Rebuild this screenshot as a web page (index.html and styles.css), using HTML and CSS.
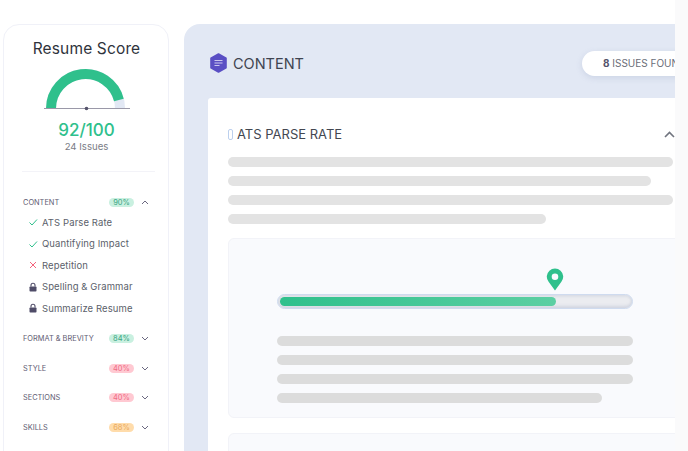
FILE: index.html
```html
<!DOCTYPE html>
<html lang="en">
<head>
    <meta charset="UTF-8">
    <title>Resume Score</title>
    <meta name="viewport" content="width=device-width, initial-scale=1.0">
    <link rel="stylesheet" href="styles.css">
</head>
<body>
<div class="page">
    <aside class="sidebar">
        <h2 class="score-title">Resume Score</h2>
        <svg class="gauge" width="90" height="44" viewBox="0 0 90 44">
            <path d="M8 39.5 A34.5 34.5 0 0 1 77 39.5" fill="none" stroke="#e2e8f4" stroke-width="10"/>
            <path d="M8 39.5 A34.5 34.5 0 0 1 75.9 30.9" fill="none" stroke="#2fc08c" stroke-width="10"/>
            <line x1="1" y1="39.5" x2="87" y2="39.5" stroke="#9a98a8" stroke-width="1"/>
            <circle cx="43.5" cy="39.5" r="1.8" fill="#55536b"/>
        </svg>
        <div class="score-value">92/100</div>
        <div class="score-issues">24 Issues</div>
        <div class="divider"></div>

        <div class="section-row first">
            <span class="section-name">CONTENT</span>
            <span class="badge green">90%</span>
            <svg class="chev" width="8" height="5" viewBox="0 0 8 5"><path d="M1 4 L4 1 L7 4" fill="none" stroke="#6a6880" stroke-width="1"/></svg>
        </div>
        <ul class="items">
            <li><svg class="ico" width="10" height="10" viewBox="0 0 10 10"><path d="M1.5 5.5 L4 8 L9 2.5" fill="none" stroke="#2fc08c" stroke-width="1"/></svg>ATS Parse Rate</li>
            <li><svg class="ico" width="10" height="10" viewBox="0 0 10 10"><path d="M1.5 5.5 L4 8 L9 2.5" fill="none" stroke="#2fc08c" stroke-width="1"/></svg>Quantifying Impact</li>
            <li><svg class="ico" width="10" height="10" viewBox="0 0 10 10"><path d="M2 2 L8 8 M8 2 L2 8" fill="none" stroke="#f4637c" stroke-width="1"/></svg>Repetition</li>
            <li><svg class="ico" width="10" height="10" viewBox="0 0 10 10"><path d="M3 4.5 V3.2 A2 2 0 0 1 7 3.2 V4.5" fill="none" stroke="#4f4c68" stroke-width="1.1"/><rect x="1.5" y="4.5" width="7" height="5" rx="0.8" fill="#4f4c68"/></svg>Spelling &amp; Grammar</li>
            <li><svg class="ico" width="10" height="10" viewBox="0 0 10 10"><path d="M3 4.5 V3.2 A2 2 0 0 1 7 3.2 V4.5" fill="none" stroke="#4f4c68" stroke-width="1.1"/><rect x="1.5" y="4.5" width="7" height="5" rx="0.8" fill="#4f4c68"/></svg>Summarize Resume</li>
        </ul>

        <div class="section-row">
            <span class="section-name">FORMAT &amp; BREVITY</span>
            <span class="badge green">84%</span>
            <svg class="chev" width="8" height="5" viewBox="0 0 8 5"><path d="M1 1 L4 4 L7 1" fill="none" stroke="#6a6880" stroke-width="1"/></svg>
        </div>
        <div class="section-row">
            <span class="section-name">STYLE</span>
            <span class="badge red">40%</span>
            <svg class="chev" width="8" height="5" viewBox="0 0 8 5"><path d="M1 1 L4 4 L7 1" fill="none" stroke="#6a6880" stroke-width="1"/></svg>
        </div>
        <div class="section-row">
            <span class="section-name">SECTIONS</span>
            <span class="badge red">40%</span>
            <svg class="chev" width="8" height="5" viewBox="0 0 8 5"><path d="M1 1 L4 4 L7 1" fill="none" stroke="#6a6880" stroke-width="1"/></svg>
        </div>
        <div class="section-row">
            <span class="section-name">SKILLS</span>
            <span class="badge orange">68%</span>
            <svg class="chev" width="8" height="5" viewBox="0 0 8 5"><path d="M1 1 L4 4 L7 1" fill="none" stroke="#6a6880" stroke-width="1"/></svg>
        </div>
    </aside>

    <main class="panel">
        <div class="panel-head">
            <svg class="hex" width="19" height="20" viewBox="0 0 19 20">
                <path d="M9.5 1 L17 5.2 V14.8 L9.5 19 L2 14.8 V5.2 Z" fill="#5a4fc4" stroke="#5a4fc4" stroke-width="1.6" stroke-linejoin="round"/>
                <path d="M5.5 7.5 H13.5 M5.5 10 H13.5 M5.5 12.5 H10.5" stroke="#c9c5ee" stroke-width="1.1"/>
            </svg>
            <h1 class="panel-title">CONTENT</h1>
            <div class="issues-pill"><b>8</b> ISSUES FOUND</div>
        </div>

        <section class="card">
            <div class="card-head">
                <span class="marker"></span>
                <h3 class="card-title">ATS PARSE RATE</h3>
                <svg class="card-chev" width="11" height="7" viewBox="0 0 11 7"><path d="M1 6 L5.5 1.5 L10 6" fill="none" stroke="#70747f" stroke-width="1.6"/></svg>
            </div>
            <div class="skeleton">
                <div class="line l-445"></div>
                <div class="line l-423"></div>
                <div class="line l-445"></div>
                <div class="line l-318"></div>
            </div>
            <div class="box">
                <svg class="pin" width="18" height="24" viewBox="0 0 18 24">
                    <path d="M9 23.5 L2.6 14.8 A8.2 8.2 0 1 1 15.4 14.8 Z" fill="#2fc08c"/>
                    <circle cx="9" cy="9.7" r="3.3" fill="#f9fafd"/>
                </svg>
                <div class="track"><div class="fill"></div></div>
                <div class="box-lines">
                    <div class="line dark l-356"></div>
                    <div class="line dark l-356"></div>
                    <div class="line dark l-356"></div>
                    <div class="line dark l-325"></div>
                </div>
            </div>
            <div class="box"></div>
        </section>
    </main>
</div>
</body>
</html>
```

FILE: styles.css
```css
* {
    box-sizing: border-box;
}
html, body {
    margin: 0;
    height: 100%;
    overflow: hidden;
}
body {
    background: #fafafb;
    font-family: Inter, "Liberation Sans", sans-serif;
}
h1, h2, h3 {
    margin: 0;
    font-weight: 500;
}
.page {
    width: 675px;
    height: 451px;
    overflow: hidden;
    background: #fff;
    display: flex;
    align-items: flex-start;
    padding: 24px 0 0 3px;
}

/* left column */
.sidebar {
    flex: none;
    width: 166px;
    height: 460px;
    border: 1px solid #f0f1f8;
    border-radius: 16px;
    padding: 14px 14px 0 19px;
    display: flex;
    flex-direction: column;
}
.score-title {
    align-self: center;
    margin-right: 4px;
    font-size: 15.5px;
    font-weight: 400;
    line-height: 19px;
    letter-spacing: 0.15px;
    color: #2f333c;
}
.gauge {
    display: block;
    margin: 11px 0 0 20px;
    overflow: visible;
}
.score-value {
    margin: 7px 4px 0 0;
    text-align: center;
    font-size: 17px;
    line-height: 20px;
    font-weight: 500;
    color: #2fc08c;
}
.score-issues {
    margin-right: 4px;
    text-align: center;
    font-size: 9.6px;
    line-height: 13px;
    color: #7b7d86;
}
.divider {
    height: 1px;
    background: #f3f3f8;
    margin: 18px -1px 0 -1px;
}
.section-row {
    display: flex;
    align-items: center;
    height: 12px;
    margin-top: 17.6px;
}
.section-row.first {
    margin-top: 24px;
}
.section-name {
    width: 86px;
    font-size: 7.4px;
    color: #5f5d74;
    white-space: nowrap;
}
.badge {
    width: 25px;
    height: 9px;
    border-radius: 5px;
    font-size: 7.5px;
    line-height: 9px;
    text-align: center;
}
.green {
    background: #c9f0e0;
    color: #3aa583;
}
.red {
    background: #ffc9d2;
    color: #ef6d84;
}
.orange {
    background: #ffdcab;
    color: #e9aa5d;
}
.chev {
    margin-left: 7px;
}
.items {
    list-style: none;
    margin: 3.5px 0 0 0;
    padding: 0 0 0 5px;
}
.items li {
    display: flex;
    align-items: center;
    height: 21.5px;
    font-size: 9.5px;
    letter-spacing: 0.1px;
    color: #5b5f6b;
    white-space: nowrap;
}
.ico {
    margin-right: 4px;
    flex: none;
}
.items + .section-row {
    margin-top: 13.5px;
}

/* right panel */
.panel {
    flex: none;
    width: 520px;
    height: 440px;
    margin-left: 15px;
    background: #e2e8f4;
    border-radius: 16px 0 0 0;
    padding: 0 0 0 24px;
}
.panel-head {
    display: flex;
    align-items: center;
    height: 74px;
    padding: 4px 0 0 1px;
}
.panel-title {
    margin-left: 5px;
    font-size: 14.5px;
    font-weight: 400;
    color: #3f4450;
}
.hex {
    flex: none;
}
.issues-pill {
    margin-left: 278px;
    height: 25px;
    width: 130px;
    flex: none;
    background: #fff;
    border-radius: 13px;
    box-shadow: 0 2px 6px rgba(120, 135, 175, 0.2);
    padding-left: 21px;
    font-size: 10px;
    line-height: 25px;
    color: #6a6d78;
    white-space: nowrap;
}
.issues-pill b {
    color: #55536b;
    font-weight: 700;
}
.card {
    background: #fff;
    width: 496px;
    height: 360px;
    border-radius: 3px 0 0 0;
    padding-left: 20px;
}
.card-head {
    display: flex;
    align-items: center;
    width: 447px;
    height: 59px;
    padding-top: 13px;
}
.marker {
    width: 5px;
    height: 11px;
    border: 1px solid #bcd0ee;
    border-radius: 2px;
    margin-right: 4px;
}
.card-title {
    flex: 1;
    font-size: 13px;
    font-weight: 400;
    color: #434751;
}
.skeleton {
    display: flex;
    flex-direction: column;
    gap: 9px;
}
.line {
    height: 10px;
    border-radius: 5px;
    background: #e3e3e3;
}
.line.dark {
    background: #dcdcdc;
}
.l-445 { width: 445px; }
.l-423 { width: 423px; }
.l-318 { width: 318px; }
.l-356 { width: 356px; }
.l-325 { width: 325px; }
.box {
    position: relative;
    width: 476px;
    height: 180px;
    margin: 14px 0 15px 0;
    background: #f9fafd;
    border: 1px solid #f2f3f8;
    border-radius: 6px;
    padding: 55px 0 0 48px;
}
.pin {
    position: absolute;
    left: 317px;
    top: 28px;
}
.track {
    width: 356px;
    height: 15px;
    border-radius: 8px;
    background: #ebecf0;
    border: 1px solid #cfdbef;
    box-shadow: inset 0 -2px 3px rgba(150, 160, 190, 0.3), inset 0 2px 2px rgba(150, 160, 190, 0.15);
    padding: 2px;
}
.fill {
    width: 276px;
    height: 100%;
    border-radius: 5px;
    background: linear-gradient(90deg, #2fc08c, #5ccfa3);
}
.box-lines {
    display: flex;
    flex-direction: column;
    gap: 9px;
    margin-top: 27px;
}
```
